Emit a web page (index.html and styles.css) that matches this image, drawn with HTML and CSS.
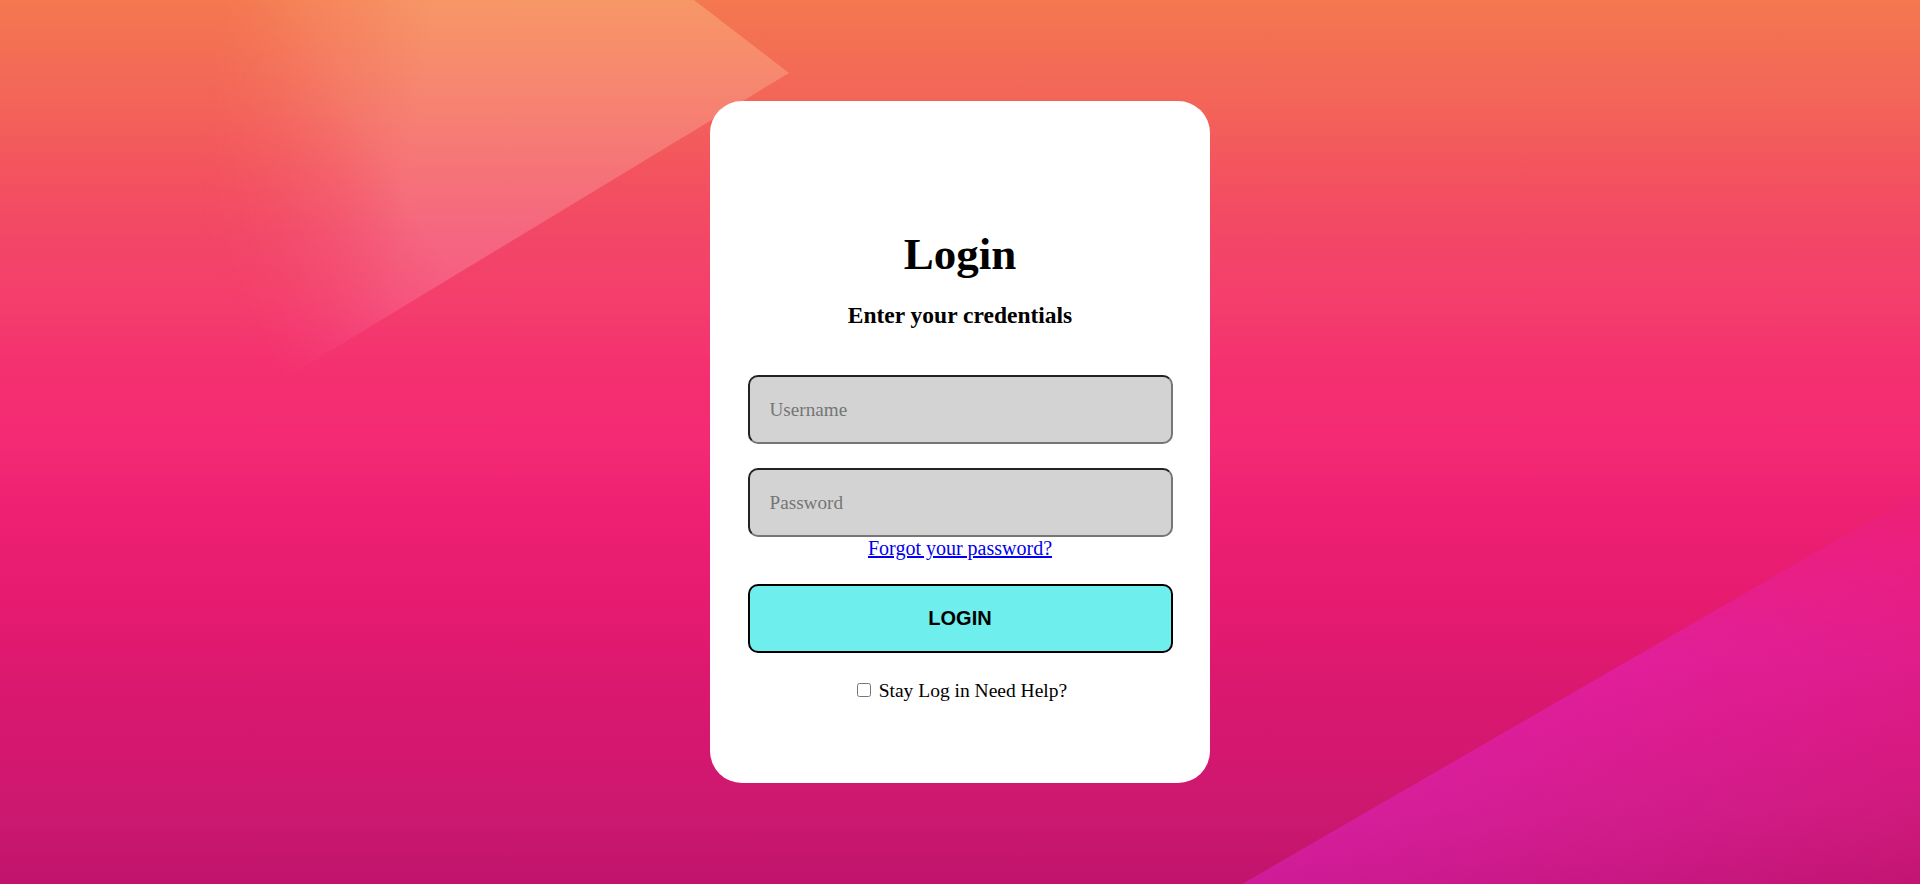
FILE: index.html
```html
<!DOCTYPE html>
<html lang="en">
<head>
<meta charset="utf-8">
<title>Login</title>
<link rel="stylesheet" href="styles.css">
</head>
<body class="page">
  <main class="stage">
    <form class="card">
      <h1 class="title">Login</h1>
      <h3 class="subtitle">Enter your credentials</h3>
      <input class="field" type="text" placeholder="Username">
      <input class="field field-gap" type="password" placeholder="Password">
      <a class="forgot" href="#">Forgot your password?</a>
      <button class="btn" type="button">LOGIN</button>
      <div class="extra"><input class="check" type="checkbox"> Stay Log in Need Help?</div>
    </form>
  </main>
</body>
</html>
```

FILE: styles.css
```css
html, body {
  margin: 0;
  padding: 0;
}

.page {
  height: 884px;
  font-family: "Liberation Serif", "Times New Roman", serif;
  background-color: #f0306f;
  background-image: url("data:image/svg+xml,<svg xmlns='http://www.w3.org/2000/svg' viewBox='0 0 1920 884' preserveAspectRatio='none'><defs><linearGradient id='b' x1='0' y1='0' x2='0' y2='1'><stop offset='0' stop-color='%23f47850'/><stop offset='.113' stop-color='%23f36558'/><stop offset='.19' stop-color='%23f3545e'/><stop offset='.264' stop-color='%23f24766'/><stop offset='.34' stop-color='%23f43e6c'/><stop offset='.415' stop-color='%23f43070'/><stop offset='.5' stop-color='%23f42a74'/><stop offset='.576' stop-color='%23ee2072'/><stop offset='.69' stop-color='%23e51b70'/><stop offset='.763' stop-color='%23dc186f'/><stop offset='.84' stop-color='%23d5176f'/><stop offset='.915' stop-color='%23cd1870'/><stop offset='1' stop-color='%23c0146c'/></linearGradient><linearGradient id='lc' gradientUnits='userSpaceOnUse' x1='0' y1='0' x2='0' y2='400'><stop offset='0' stop-color='%23ffd898' stop-opacity='.32'/><stop offset='.5' stop-color='%23ffc8c8' stop-opacity='.26'/><stop offset='1' stop-color='%23ffb8e0' stop-opacity='.22'/></linearGradient><linearGradient id='lb' gradientUnits='userSpaceOnUse' x1='220' y1='0' x2='430' y2='28'><stop offset='0' stop-color='black'/><stop offset='1' stop-color='white'/></linearGradient><mask id='kb'><rect width='1920' height='884' fill='url(%23lb)'/></mask><linearGradient id='la' gradientUnits='userSpaceOnUse' x1='789' y1='73' x2='276' y2='385'><stop offset='0' stop-color='white'/><stop offset='.65' stop-color='white'/><stop offset='1' stop-color='black'/></linearGradient><mask id='ka'><rect width='1920' height='884' fill='url(%23la)'/></mask><linearGradient id='m' gradientUnits='userSpaceOnUse' x1='1500' y1='735' x2='1675' y2='1038'><stop offset='0' stop-color='%23e82be6' stop-opacity='.36'/><stop offset='1' stop-color='%23e82be6' stop-opacity='.04'/></linearGradient><linearGradient id='f' gradientUnits='userSpaceOnUse' x1='0' y1='480' x2='0' y2='660'><stop offset='0' stop-color='black'/><stop offset='1' stop-color='white'/></linearGradient><mask id='k'><rect width='1920' height='884' fill='url(%23f)'/></mask></defs><rect width='1920' height='884' fill='url(%23b)'/><g mask='url(%23ka)'><polygon points='200,0 694,0 789,73 150,460' fill='url(%23lc)' mask='url(%23kb)'/></g><polygon points='1242,884 1920,492 1920,884' fill='url(%23m)' mask='url(%23k)'/></svg>");
  background-size: 100% 100%;
  background-repeat: no-repeat;
}

.stage {
  height: 884px;
  display: flex;
  align-items: center;
  justify-content: center;
}

.card {
  box-sizing: border-box;
  width: 500px;
  height: 682px;
  padding-top: 131px;
  background: #ffffff;
  border-radius: 32px;
  display: flex;
  flex-direction: column;
  align-items: center;
}

.title {
  margin: 0;
  font-size: 45px;
  line-height: 45px;
  font-weight: bold;
  color: #000;
}

.subtitle {
  margin: 27px 0 0;
  font-size: 23.5px;
  line-height: 23px;
  font-weight: bold;
  color: #000;
}

.field {
  box-sizing: border-box;
  width: 425px;
  height: 69px;
  margin: 48px 0 0;
  padding: 0 20px;
  font-family: "Liberation Serif", "Times New Roman", serif;
  font-size: 19.2px;
  color: #000;
  background: #d3d3d3;
  border: 2px solid;
  border-color: #222222 #767676 #767676 #222222;
  border-radius: 10px;
  outline: none;
}

.field::placeholder {
  color: #757575;
}

.field-gap {
  margin-top: 24px;
}

.forgot {
  display: block;
  font-size: 20px;
  line-height: 23px;
  color: #0000ee;
  text-decoration: underline;
}

.btn {
  box-sizing: border-box;
  width: 425px;
  height: 69px;
  margin-top: 24px;
  padding: 0;
  font-family: "Liberation Sans", Arial, sans-serif;
  font-size: 20px;
  font-weight: bold;
  color: #000;
  background: #6eeeec;
  border: 2px solid #000;
  border-radius: 10px;
}

.extra {
  margin-top: 26px;
  font-size: 19.5px;
  line-height: 23px;
  color: #000;
}

.check {
  margin: 3px 3px 3px 4px;
  width: 14px;
  height: 14px;
}
```
